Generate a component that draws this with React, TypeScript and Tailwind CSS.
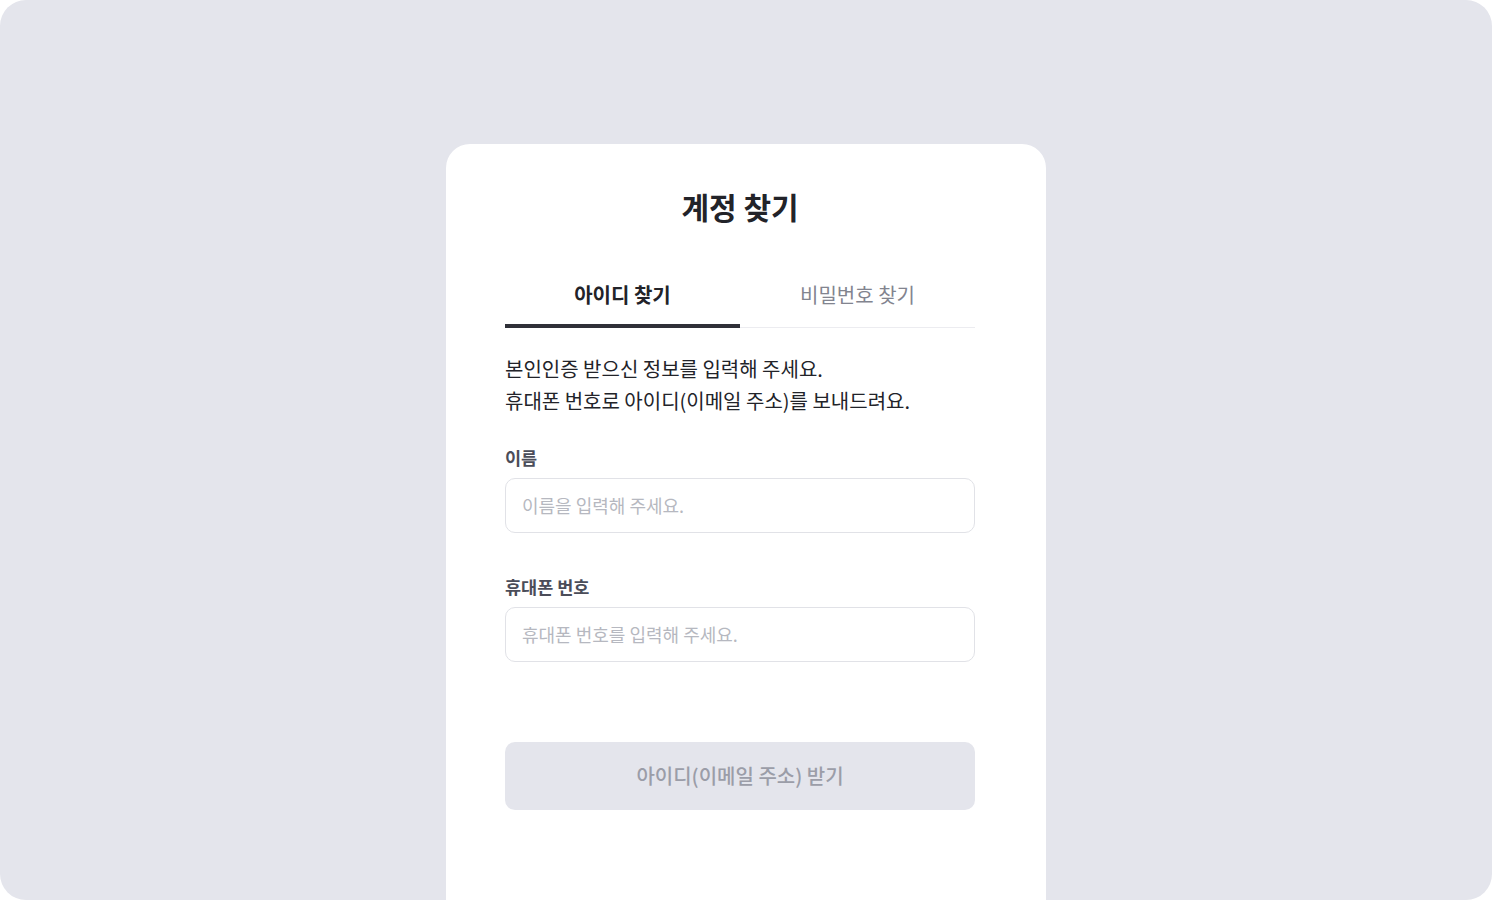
import React from "react";

export default function App() {
  return (
    <div
      className="w-[1492px] h-[900px] bg-white"
      style={{ fontFamily: '"Noto Sans CJK KR", "Noto Sans", sans-serif' }}
    >
      <div className="w-full h-full rounded-[26px] bg-[#e4e5ec] overflow-hidden flex justify-center pt-[144px]">
        <div className="w-[600px] h-[800px] bg-white rounded-t-[24px] pl-[59px] pr-[71px] pt-[38px] flex flex-col">
          <h1 className="text-center text-[30px] leading-[48px] font-bold text-[#222329]">
            계정 찾기
          </h1>
          <div className="mt-[51px] flex border-b border-[#ececf0]">
            <div className="flex-1 flex flex-col items-center">
              <span className="text-[20px] leading-[28px] font-bold text-[#222329]">
                아이디 찾기
              </span>
              <div className="mt-[15px] w-full h-[4px] bg-[#2f3038] -mb-px" />
            </div>
            <div className="flex-1 flex flex-col items-center">
              <span className="text-[20px] leading-[28px] font-normal text-[#82848f]">
                비밀번호 찾기
              </span>
            </div>
          </div>
          <p className="mt-[25px] text-[20px] leading-[32px] text-[#222329]">
            본인인증 받으신 정보를 입력해 주세요.
            <br />
            휴대폰 번호로 아이디(이메일 주소)를 보내드려요.
          </p>
          <label className="mt-[29px] text-[17.5px] leading-[24px] font-bold text-[#4b4d59]">
            이름
          </label>
          <div className="mt-[8px] h-[55px] rounded-[10px] border border-[#e1e2e7] flex items-center px-[16px]">
            <span className="text-[18px] text-[#b6b8c0]">
              이름을 입력해 주세요.
            </span>
          </div>
          <label className="mt-[42px] text-[17.5px] leading-[24px] font-bold text-[#4b4d59]">
            휴대폰 번호
          </label>
          <div className="mt-[8px] h-[55px] rounded-[10px] border border-[#e1e2e7] flex items-center px-[16px]">
            <span className="text-[18px] text-[#b6b8c0]">
              휴대폰 번호를 입력해 주세요.
            </span>
          </div>
          <button className="mt-[80px] h-[68px] rounded-[10px] bg-[#e4e5ec] flex items-center justify-center">
            <span className="text-[20px] font-medium text-[#9b9da8]">
              아이디(이메일 주소) 받기
            </span>
          </button>
        </div>
      </div>
    </div>
  );
}
